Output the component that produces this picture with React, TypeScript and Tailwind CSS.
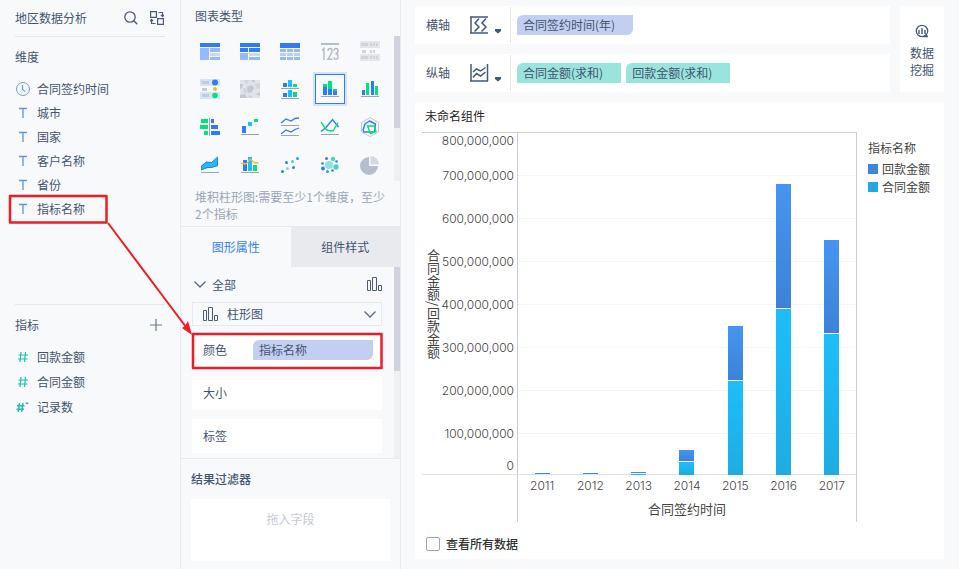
import React from "react";

type Glyph = { label: string; art: React.ReactNode };

const B = "#2f7df0";
const L = "#94bbf8";
const G = "#00e37a";
const C = "#1fbdfb";
const N = "#9aa5bd";

const glyphs: Glyph[] = [
  {
    label: "分组表",
    art: (
      <>
        <path fill={B} d="M0 2h20v4H0z" />
        <path fill={L} d="M0 7h9v12H0zM10 7h10v4H10zM10 16h10v3H10z" />
        <path fill="#cdd8ee" d="M10 12h10v3H10z" />
      </>
    ),
  },
  {
    label: "交叉表",
    art: (
      <>
        <path fill={B} d="M0 2h20v4H0zM0 7h8v4H0zM9 7h11v4H9z" />
        <path fill={L} d="M0 12h8v7H0zM9 16h11v3H9z" />
        <path fill="#cdd8ee" d="M9 12h11v3H9z" />
      </>
    ),
  },
  {
    label: "明细表",
    art: (
      <>
        <path fill={B} d="M0 2h20v5H0z" />
        <path fill={L} d="M0 8h6v3H0zM7 8h6v3H7zM14 8h6v3h-6zM0 16h6v3H0zM7 16h6v3H7zM14 16h6v3h-6z" />
        <path fill="#c3cde2" d="M0 12h6v3H0zM7 12h6v3H7zM14 12h6v3h-6z" />
      </>
    ),
  },
  {
    label: "指标卡",
    art: (
      <>
        <path fill="#b3bdc9" d="M1 2h18v2H1z" />
        <path
          fill="none"
          stroke="#b3bdc9"
          strokeWidth="1.5"
          d="M2 9.500l2-2V19M8 10q0-2.500 2-2.500t2 2.500q0 2-4 8.200h4.500M14 9.500q0-2 2-2t2 2.500q0 2.500-2.500 2.500Q18 13 18 15.500T16 18.300q-2 0-2-2"
        />
      </>
    ),
  },
  {
    label: "文本表",
    art: (
      <>
        <path fill="#e3e6eb" d="M0 0h20v7H0zM0 13h20v7H0z" />
        <path fill="#cfd3da" d="M1 2h7v3H1zM2 9h4v3H2zM1 15h7v3H1zM10 2h2v3h-2zM13 2h2v3h-2zM16 2h2v3h-2zM10 9h2v3h-2zM13 9h2v3h-2zM10 15h2v3h-2zM13 15h2v3h-2zM16 15h2v3h-2z" />
      </>
    ),
  },
  {
    label: "KPI 表",
    art: (
      <>
        <path fill="#d3e3f8" d="M0 0h20v7H0zM0 13h20v7H0z" />
        <path fill="#c3cbd8" d="M2 2h7v3H2zM2 9h5v3H2zM2 15h7v3H2z" />
        <circle cx="15" cy="3.500" r="3" fill={B} />
        <circle cx="15" cy="10" r="2" fill="#f5bd1f" />
        <circle cx="15" cy="16.500" r="2.700" fill={G} />
      </>
    ),
  },
  {
    label: "热力图",
    art: (
      <>
        <path fill="#e0e3e8" d="M0 1h20v18H0z" />
        <path fill="#c3c8d0" d="M0 5l3 0-1 4-2 1zM7 8l5-2 2 3-2 4-4 1zM11 1h4l-1 3zM16 15l4-2v4zM0 16l5-1 2 4H0z" />
        <path fill="#d0d4db" d="M4 1h5l-2 5zM15 5l5-1v5l-3 1zM8 16l4 1v2H9zM3 9l3 0 1 5-3 0z" />
      </>
    ),
  },
  {
    label: "分区柱形图",
    art: (
      <>
        <path fill={B} d="M3 4h4v4H3zM3 14h4v4H3z" />
        <path fill={C} d="M8 1h4v7H8zM8 11h4v7H8z" />
        <path fill={G} d="M13 5h4v3h-4zM13 13h4v5h-4z" />
        <path fill={N} d="M1 9h18v1H1zM1 19h18v1H1z" />
      </>
    ),
  },
  {
    label: "堆积柱形图",
    art: (
      <>
        <path fill={B} d="M3 8h4v8H3zM8 10h4v6H8zM13 12h4v4h-4z" />
        <path fill={G} d="M3 5h4v3H3zM8 2h4v8H8zM13 10h4v2h-4z" />
        <path fill={N} d="M1 17h18v1H1z" />
      </>
    ),
  },
  {
    label: "多系列柱形图",
    art: (
      <>
        <path fill={B} d="M2 11h3v5H2zM11 2h3v14h-3z" />
        <path fill={G} d="M6 4h3v12H6zM15 7h3v9h-3z" />
        <path fill={N} d="M1 17h18v1H1z" />
      </>
    ),
  },
  {
    label: "对比柱状图",
    art: (
      <>
        <path fill={G} d="M1 2h7v4H1zM0 8h8v4H0zM4 14h4v4H4z" />
        <path fill={B} d="M11 2h3v4h-3zM11 8h7v4h-7zM11 14h9v4h-9z" />
        <path fill={N} d="M9 1h1v18H9z" />
      </>
    ),
  },
  {
    label: "瀑布图",
    art: (
      <>
        <path fill={B} d="M2 9h4v7H2z" />
        <path fill={C} d="M8 5h4v4H8z" />
        <path fill={G} d="M14 2h4v3h-4z" />
        <path fill={N} d="M1 17h18v1H1z" />
      </>
    ),
  },
  {
    label: "分区折线图",
    art: (
      <>
        <path fill="none" stroke={B} strokeWidth="1.300" d="M1 6l5-4 5 2 4-2.500 4-.5M1 17l5-4 5 2 4-2.500 4-1.500" />
        <path fill={N} d="M1 8h18v1H1zM1 18h18v1H1z" />
      </>
    ),
  },
  {
    label: "折线图",
    art: (
      <>
        <path fill="none" stroke={B} strokeWidth="1.400" d="M1 14.500l5-4 6.500-8 6 7.500" />
        <path fill="none" stroke={G} strokeWidth="1.400" d="M1 5l5 7.500 2 1 5 .5 5-8.500" />
        <path fill={N} d="M1 17h18v1H1z" />
      </>
    ),
  },
  {
    label: "雷达图",
    art: (
      <>
        <path fill="none" stroke="#c2c8d2" d="M10 .5l8.500 5v9.500L10 19.500 1.500 15V5.500z" />
        <path fill="none" stroke={B} strokeWidth="1.400" d="M9.500 4l6 3-1 8H4l-1-2 2-6z" />
        <path fill="none" stroke={G} strokeWidth="1.400" d="M7.500 9h7l1.500 5.500-5.500 2z" />
      </>
    ),
  },
  {
    label: "面积图",
    art: (
      <>
        <path fill={C} d="M1 11l5-4 6 0 6-5v9l-7 2-3 0-7 2z" />
        <path fill="none" stroke={B} d="M1.500 15v-4l5-4 5 .5 6-5.500v9M1 15l6-2.500 4 0 7-2" />
        <path fill={N} d="M1 17h18v1H1z" />
      </>
    ),
  },
  {
    label: "组合图",
    art: (
      <>
        <path fill={B} d="M3 5h4v11H3z" />
        <path fill={C} d="M8 2h4v14H8z" />
        <path fill={G} d="M13 10h4v6h-4z" />
        <path fill="none" stroke="#f5c02b" strokeWidth="1.400" d="M1 8.500h3l1 .5q2 0 3.500-3t4 0 3 1.500l3 .5" />
        <path fill={N} d="M1 17h18v1H1z" />
      </>
    ),
  },
  {
    label: "散点图",
    art: (
      <>
        <circle cx="2.500" cy="16.500" r="1.500" fill={B} />
        <circle cx="6.500" cy="7.500" r="1.500" fill={B} />
        <circle cx="13.500" cy="12.500" r="1.500" fill={B} />
        <circle cx="7.500" cy="13.500" r="1.500" fill="#71ded2" />
        <circle cx="12.500" cy="6.500" r="1.500" fill="#52cfc0" />
        <circle cx="17.500" cy="3.500" r="1.500" fill="#2d9cf3" />
      </>
    ),
  },
  {
    label: "聚合气泡图",
    art: (
      <>
        <circle cx="9" cy="10" r="4" fill="#8fe0d8" />
        <circle cx="13" cy="4" r="2.200" fill="#52cfc0" />
        <circle cx="16" cy="12" r="2.700" fill="#52cfc0" />
        <circle cx="6.500" cy="3.500" r="1.500" fill={B} />
        <circle cx="2.500" cy="8.500" r="1.300" fill={B} />
        <circle cx="3" cy="13.500" r="1.900" fill={B} />
        <circle cx="7.500" cy="16.500" r="1.500" fill="#2d9cf3" />
        <circle cx="12.500" cy="15.500" r="1.300" fill={B} />
        <circle cx="16.500" cy="6.500" r="1.300" fill={B} />
      </>
    ),
  },
  {
    label: "饼图",
    art: (
      <>
        <path fill="#b7becb" d="M9 2v9h9a9 9 0 1 1-9-9z" />
        <path fill="#d5d8e2" d="M10.500 1a8.500 8.500 0 0 1 8.500 8.500h-8.500z" />
      </>
    ),
  },
];

function BarsIcon({ className }: { className: string }) {
  return (
    <svg viewBox="0 0 15 15" className={className} fill="none" stroke="#4b5c78" aria-hidden="true">
      <path d="M.5 3.500h3v10h-3zM5.500.5h4v13h-4zM11.500 8.500h3v5h-3z" />
    </svg>
  );
}

function Chevron() {
  return (
    <svg viewBox="0 0 12 7" className="h-[7px] w-3 shrink-0" fill="none" stroke="#5a6a84" strokeWidth="1.300" aria-hidden="true">
      <path d="M.5.5L6 6 11.500.5" />
    </svg>
  );
}

function HashIcon({ star }: { star?: boolean }) {
  return (
    <svg viewBox="0 0 14 12" className="h-3 w-3.5" fill="none" stroke="#1fbfae" strokeWidth="1.200" aria-hidden="true">
      {star ? (
        <path strokeWidth="1.500" d="M3.500 2L2.200 11M7 2L5.700 11M1 4.800h7.500M.5 8.200H8M9.800 2.200h2.600" />
      ) : (
        <path d="M5 1L4 11M9.500 1l-1 10M2.500 4h9.500M2 8h9.500" />
      )}
    </svg>
  );
}

function TextIcon() {
  return (
    <svg viewBox="0 0 14 12" className="h-3 w-3.5" fill="none" stroke="#5c93ee" strokeWidth="1.300" aria-hidden="true">
      <path d="M3 1.500h8M7 1.500V11" />
    </svg>
  );
}

function ClockIcon() {
  return (
    <svg viewBox="0 0 14 14" className="h-3.5 w-3.5" fill="none" stroke="#6f9df0" aria-hidden="true">
      <circle cx="7" cy="7" r="6.500" />
      <path strokeWidth="1.300" d="M6.500 3v4.500L9 9.500" />
    </svg>
  );
}

const dimensions = ["合同签约时间", "城市", "国家", "客户名称", "省份", "指标名称"];
const measures = ["回款金额", "合同金额", "记录数"];

function FieldPanel() {
  return (
    <aside className="flex w-[181px] shrink-0 flex-col border-r border-[#e8eaed] px-[15px]">
      <header className="flex h-[37px] items-center border-b border-[#e3e6ea]">
        <h1 className="flex-1">地区数据分析</h1>
        <button aria-label="搜索" className="mr-3">
          <svg viewBox="0 0 14 14" className="h-3.5 w-3.5" fill="none" stroke="#4b5c78" strokeWidth="1.300">
            <circle cx="6" cy="6" r="5.200" />
            <path d="M9.800 9.800l3.500 3.500" />
          </svg>
        </button>
        <button aria-label="切换" className="mr-px">
          <svg viewBox="0 0 14 14" className="h-3.5 w-3.5" fill="none" stroke="#4b5c78" strokeWidth="1.200">
            <path d="M.6.6h5.800v5.800H.6zM7.600 7.600h5.800v5.800H7.600zM8.500 1.500h4V5M10.800 3.800l1.700 1.700 1.500-1.700M5.500 12.500h-4V9M0 10.200l1.500-1.700 1.700 1.700" />
          </svg>
        </button>
      </header>
      <section className="h-[267px] pt-2.5">
        <h2 className="leading-5">维度</h2>
        <ul className="pt-2.5">
          {dimensions.map((name, i) => (
            <li key={name} className="flex h-6 items-center gap-[7px] pl-px">
              {i === 0 ? <ClockIcon /> : <TextIcon />}
              {name}
            </li>
          ))}
        </ul>
      </section>
      <section className="border-t border-[#e3e6ea] pt-2.5">
        <div className="flex items-center justify-between pr-[3px] leading-5">
          <h2>指标</h2>
          <button aria-label="添加指标">
            <svg viewBox="0 0 12 12" className="h-3 w-3" stroke="#6a788f" strokeWidth="1.200">
              <path d="M6 0v12M0 6h12" />
            </svg>
          </button>
        </div>
        <ul className="pt-[9px]">
          {measures.map((name, i) => (
            <li key={name} className="flex h-[25px] items-center gap-[7px] pl-px">
              <HashIcon star={i === 2} />
              {name}
            </li>
          ))}
        </ul>
      </section>
    </aside>
  );
}

function DropRow({ label, field }: { label: string; field?: string }) {
  return (
    <div className="flex h-[34px] items-center bg-white pr-[9px] pl-[11px]">
      <span className="w-[50px]">{label}</span>
      {field && (
        <span className="h-5 flex-1 rounded-tl-md rounded-br-md bg-[#c2cff1] px-1.5 leading-5">{field}</span>
      )}
    </div>
  );
}

function ConfigPanel() {
  return (
    <aside className="flex w-[220px] shrink-0 flex-col border-r border-[#e8eaed]">
      <section className="flex h-[227px] flex-col border-b border-[#e8eaed]">
        <h2 className="pt-1.5 pl-3.5 leading-5">图表类型</h2>
        <div className="flex justify-between pt-1.5 pl-[9px]">
          <div className="grid grid-cols-[repeat(5,40px)]">
            {glyphs.map((g, i) => (
              <button
                key={g.label}
                aria-label={g.label}
                aria-pressed={i === 8}
                className="flex h-[38px] items-center justify-center"
              >
                <span
                  className={
                    i === 8
                      ? "flex border border-[#2f7df0] p-1 ring-2 ring-[#d3e3f8]"
                      : "flex p-1"
                  }
                >
                  <svg viewBox="0 0 20 20" className="h-5 w-5 shrink-0">
                    {g.art}
                  </svg>
                </span>
              </button>
            ))}
          </div>
          <div className="mt-1 h-[145px] w-1.5 bg-[#eef0f2]">
            <div className="h-[92px] bg-[#d0d3de]" />
          </div>
        </div>
        <p className="px-3.5 pt-1 leading-[17px] text-[#9ba5b6]">堆积柱形图:需要至少1个维度，至少2个指标</p>
      </section>
      <div role="tablist" className="flex h-10">
        <button role="tab" aria-selected="true" className="flex-1 text-[#3685f2]">
          图形属性
        </button>
        <button role="tab" aria-selected="false" className="flex-1 bg-[#e8eaed]">
          组件样式
        </button>
      </div>
      <section className="flex h-[192px] border-b border-[#e8eaed]">
        <div className="flex-1 pr-3 pl-[11px]">
          <div className="flex h-[35px] items-center gap-1.5 pl-0.5">
            <Chevron />
            <span className="flex-1">全部</span>
            <BarsIcon className="h-[15px] w-[15px]" />
          </div>
          <div className="flex h-6 items-center border border-[#e6e9ed]">
            <BarsIcon className="ml-2.5 h-[15px] w-[15px]" />
            <select aria-label="图形" className="h-full flex-1 appearance-none bg-transparent pl-[9px]">
              <option>柱形图</option>
            </select>
            <div className="pointer-events-none pr-[5px]">
              <Chevron />
            </div>
          </div>
          <div className="flex flex-col gap-[9px] pt-[7px]">
            <DropRow label="颜色" field="指标名称" />
            <DropRow label="大小" />
            <DropRow label="标签" />
          </div>
        </div>
        <div className="w-1.5 bg-[#eef0f2]">
          <div className="h-[104px] bg-[#d0d3de]" />
        </div>
      </section>
      <section className="px-2.5 pt-2.5">
        <h2 className="leading-5 font-medium">结果过滤器</h2>
        <div className="mt-2.5 h-[62px] bg-white pt-2.5 text-center leading-5 text-[#c3c9d4]">拖入字段</div>
      </section>
    </aside>
  );
}

function AxisShelf({ label, fields, tone, icon }: { label: string; fields: string[]; tone: string; icon: React.ReactNode }) {
  return (
    <div className="flex h-[38px] items-center bg-white pl-[11px]">
      <span className="w-[43px]">{label}</span>
      <button aria-label={label + "设置"} className="flex items-end gap-[5px] pr-2">
        <svg viewBox="0 0 20 18" className="h-[18px] w-5" fill="none" stroke="#44587a" strokeWidth="1.500">
          {icon}
        </svg>
        <svg viewBox="0 0 8 5" className="h-[5px] w-2" fill="#44587a">
          <path d="M1 0h6v2L4 4.500 1 2z" />
        </svg>
      </button>
      <div className="flex h-9 items-center gap-[5px] border-l border-[#e3e6ea] pl-1.5">
        {fields.map((f) => (
          <span key={f} className={"h-5 rounded-tl-md pr-[18px] pl-1.5 leading-5 " + tone}>
            {f}
          </span>
        ))}
      </div>
    </div>
  );
}

const PLOT = 342;
const MAX = 800;
const ticks = [800, 700, 600, 500, 400, 300, 200, 100, 0];
const bars = [
  { year: 2011, contract: 0, payment: 3 },
  { year: 2012, contract: 0, payment: 3 },
  { year: 2013, contract: 3, payment: 3 },
  { year: 2014, contract: 30, payment: 26 },
  { year: 2015, contract: 220, payment: 126 },
  { year: 2016, contract: 388, payment: 290 },
  { year: 2017, contract: 330, payment: 217 },
];
const px = (v: number) => Math.round((v / MAX) * PLOT);

function tickClass(t: number) {
  if (t === 800) return "h-[21px] leading-4";
  if (t === 0) return "flex flex-1 items-end justify-end leading-4";
  return "flex h-[43px] items-center justify-end";
}

function Chart() {
  return (
    <div className="flex flex-1 items-start text-[#444]">
      <div className="flex min-w-0 flex-1 border-t border-[#cccfd2]">
        <div className="flex h-[342px] w-[95px] shrink-0 items-center border-b border-[#dfe2e8]">
          <div className="w-[18px] pl-1 text-[13px] leading-[14px] [writing-mode:vertical-rl]">合同金额/回款金额</div>
          <div className="flex h-full flex-1 flex-col pr-[3px] text-right font-[Inter] text-xs font-light">
            {ticks.map((t) => (
              <div key={t} className={tickClass(t)}>
                {t === 0 ? "0" : t + ",000,000"}
              </div>
            ))}
          </div>
        </div>
        <div className="min-w-0 flex-1 border-x border-[#cccfd2]">
          <div className="grid h-[342px] border-b border-[#dfe2e8]">
            <div className="col-start-1 row-start-1">
              {ticks.slice(1).map((t) => (
                <div key={t} className={t === 0 ? "" : "h-[43px] border-b border-[#f4f5f6]"} />
              ))}
            </div>
            <div className="col-start-1 row-start-1 -mb-px flex">
              {bars.map((b) => (
                <div key={b.year} className="flex flex-1 flex-col items-center justify-end">
                  <div
                    className="w-[15px] bg-linear-to-b from-[#4694f2] to-[#3c82da]"
                    style={{ height: px(b.payment) }}
                  />
                  <div
                    className="mt-px w-[15px] bg-linear-to-b from-[#1dbefa] to-[#1fabe2]"
                    style={{ height: px(b.contract) }}
                  />
                </div>
              ))}
            </div>
          </div>
          <div className="flex font-[Inter] text-xs leading-[22px] font-light">
            {bars.map((b) => (
              <span key={b.year} className="flex-1 text-center">
                {b.year}
              </span>
            ))}
          </div>
          <div className="h-[25px] text-center text-[13px] leading-6">合同签约时间</div>
        </div>
      </div>
      <div className="w-[87px] shrink-0 pt-1.5 pl-[11px]">
        <div className="leading-5">指标名称</div>
        <ul className="leading-[18px]">
          <li className="flex items-center gap-1 pt-0.5">
            <span className="h-2.5 w-2.5 bg-[#3d85dd]" />
            回款金额
          </li>
          <li className="flex items-center gap-1">
            <span className="h-2.5 w-2.5 bg-[#1eaae3]" />
            合同金额
          </li>
        </ul>
      </div>
    </div>
  );
}

export default function App() {
  return (
    <div className="relative flex min-h-screen bg-[#f7f9fb] font-['Noto_Sans_CJK_SC',sans-serif] text-xs text-[#45556f]">
      <FieldPanel />
      <ConfigPanel />
      <main className="flex min-w-0 flex-1 flex-col gap-2.5 pt-1.5 pr-[15px] pb-2.5 pl-3.5">
        <div className="flex gap-2.5">
          <div className="flex min-w-0 flex-1 flex-col gap-2.5">
            <AxisShelf
              label="横轴"
              fields={["合同签约时间(年)"]}
              tone="rounded-br-md bg-[#c2cff1]"
              icon={<path d="M2 1v16M1 1h18M1 17h18M10 2.500L6 7l4 4-4.500 4.500M17 2.500L13 7l4 4-4.500 4.500" />}
            />
            <AxisShelf
              label="纵轴"
              fields={["合同金额(求和)", "回款金额(求和)"]}
              tone="bg-[#99e4dd]"
              icon={<path d="M2 0v17M1 17h18M18.500 0v17M4 8l3.500-3 4 2L16.500 3.500M4 13.500l3.500-4 4 2.500 5-4" />}
            />
          </div>
          <button className="flex w-11 flex-col items-center justify-center bg-white pt-1 leading-[17px]">
            <svg viewBox="0 0 14 14" className="mb-1.5 h-3.5 w-3.5" fill="none" stroke="#4b5c78" strokeWidth="1.300" aria-hidden="true">
              <circle cx="7" cy="7" r="5.700" />
              <path d="M9 12.500h4M10.500 10.500l2 2" />
              <path fill="#7c8ba3" stroke="none" d="M3 6h2v4H3zM6 4h2v6H6zM9 6h2v4H9z" />
            </svg>
            <span>数据</span>
            <span>挖掘</span>
          </button>
        </div>
        <section className="flex flex-1 flex-col bg-white pl-[7px]">
          <h2 className="h-[30px] pt-1 pl-[3px] leading-5 text-[#222]">未命名组件</h2>
          <Chart />
          <label className="flex items-center gap-1.5 pb-1.5 pl-1 leading-[18px] font-medium text-[#333]">
            <input type="checkbox" className="h-3.5 w-3.5 appearance-none rounded-xs border border-[#9aa5bd] bg-white" />
            查看所有数据
          </label>
        </section>
      </main>
      <svg viewBox="0 0 400 380" className="pointer-events-none absolute top-0 left-0 h-[380px] w-[400px]" fill="none" stroke="#ee1c25" strokeWidth="2.500" strokeLinejoin="round" aria-hidden="true">
        <rect x="10" y="196" width="96.500" height="26.500" />
        <rect x="193" y="334" width="188.500" height="34" />
        <path strokeWidth="2" d="M108 223l78 104" />
        <path fill="#ee1c25" stroke="none" d="M192 335l-10-7 3-2 3-5z" />
      </svg>
    </div>
  );
}
